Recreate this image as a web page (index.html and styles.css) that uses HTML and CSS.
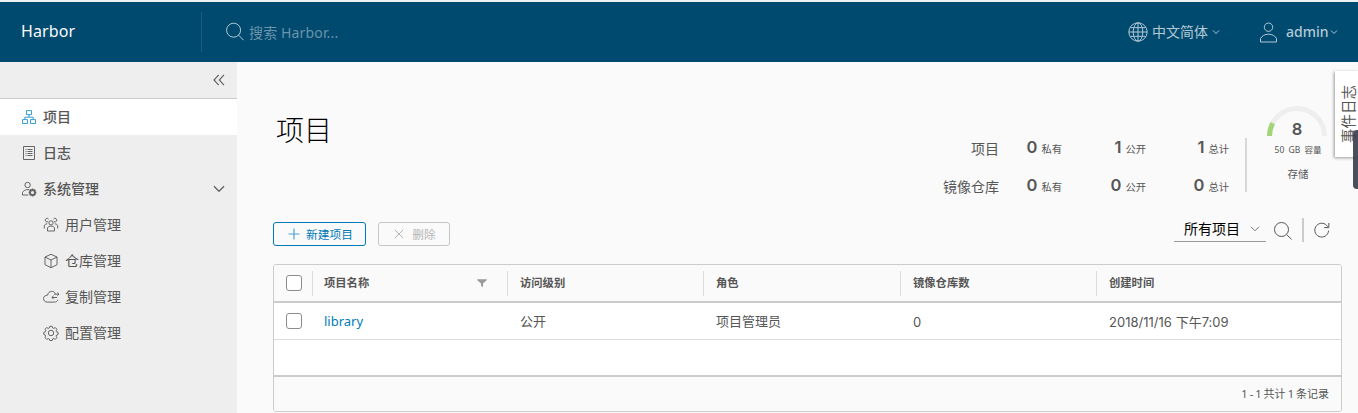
FILE: index.html
```html
<!DOCTYPE html>
<html lang="zh-CN">
<head>
<meta charset="utf-8">
<title>Harbor</title>
<link rel="stylesheet" href="styles.css">
</head>
<body>
<header class="header">
  <div class="brand">Harbor</div>
  <div class="search">
    <svg class="ic" width="20" height="20" viewBox="0 0 20 20"><circle cx="8.6" cy="8.2" r="7"/><path d="M13.6 13.2l5 5"/></svg>
    <span>搜索 Harbor...</span>
  </div>
  <div class="lang">
    <svg class="ic" width="20" height="20" viewBox="0 0 20 20"><circle cx="10" cy="10" r="9.2"/><ellipse cx="10" cy="10" rx="4.8" ry="9.2"/><path d="M10 1v18M1 10h18M2.3 5.7h15.4M2.3 14.3h15.4"/></svg>
    <span>中文简体</span>
    <svg class="ic caret" width="8" height="8" viewBox="0 0 8 8"><path d="M1 2.5l3 3 3-3"/></svg>
  </div>
  <div class="user">
    <svg class="ic" width="20" height="22" viewBox="0 0 20 22"><circle cx="9.500" cy="6.200" r="4.200"/><path d="M1.500 21v-3.400c1.300-2.800 4.300-4.400 8-4.400s6.700 1.600 8 4.400V21z"/></svg>
    <span>admin</span>
    <svg class="ic caret" width="8" height="8" viewBox="0 0 8 8"><path d="M1 2.500l3 3 3-3"/></svg>
  </div>
</header>
<div class="main">
  <nav class="sidebar">
    <div class="collapse"><svg class="ic" width="12" height="12" viewBox="0 0 12 12"><path d="M5.700 .8L1 6l4.700 5.200M11 .8L6.300 6 11 11.200"/></svg></div>
    <a class="item active"><svg class="ic" width="16" height="16" viewBox="0 0 16 16"><path d="M5.500 1.600h5v4h-5zM1.500 10.600h5v3.900h-5zM9.500 10.600h5v3.900h-5zM8 5.600v2.500M3.800 10.500V8.200h8.400v2.300"/></svg><span>项目</span></a>
    <a class="item"><svg class="ic" width="16" height="16" viewBox="0 0 16 16"><path d="M2.500 1.500h11v13h-11z"/><path d="M4.500 4.500h1M6.500 4.500h5M4.500 6.500h1M6.500 6.500h5M4.500 8.500h1M6.500 8.500h5M4.500 10.500h1M6.500 10.500h5"/></svg><span>日志</span></a>
    <a class="item"><svg class="ic" width="16" height="16" viewBox="0 0 16 16"><circle cx="6.600" cy="4" r="2.700"/><path d="M7.300 14H1.500v-2.500C2.500 9.700 4.300 8.600 6.800 8.600l1.400.1"/><circle cx="11.500" cy="11.500" r="2.500" stroke-width="1.800"/><path d="M11.500 7.600v1M11.500 14.400v1M7.600 11.500h1M14.400 11.500h1M8.700 8.700l.8.800M13.500 13.500l.8.800M14.300 8.700l-.8.800M9.500 13.500l-.8.800" stroke-width="1.500"/></svg><span>系统管理</span><svg class="ic fold" width="12" height="8" viewBox="0 0 12 8"><path d="M1 1.200l5 5 5-5"/></svg></a>
    <a class="item sub"><svg class="ic" width="16" height="16" viewBox="0 0 16 16"><circle cx="8" cy="5.900" r="2.100"/><path d="M4.500 14v-3c.4-1.200 1.600-1.900 3.500-1.900s3.100.7 3.500 1.900v3zM5.200 4.500A1.800 1.800 0 1 1 5.600 2.200M10.800 4.500a1.800 1.800 0 1 0-.4-2.300M4.200 6.800C2.600 7 1.300 7.700 1.300 8.800v2.700M11.800 6.800c1.600.2 2.900.9 2.900 2v2.700"/></svg><span>用户管理</span></a>
    <a class="item sub"><svg class="ic" width="16" height="16" viewBox="0 0 16 16"><path d="M8 1.300l6 2.700v7.700l-6 3-6-3V4zM2 4l6 3 6-3M8 7v7.500"/></svg><span>仓库管理</span></a>
    <a class="item sub"><svg class="ic wide" width="18" height="16" viewBox="0 0 18 16"><path d="M12.400 4.700C11.500 2.900 10 2.200 8.400 2.400 6.300 2.600 4.900 4 4.700 6.100c-2.500.2-4.200 1.400-4.200 3.400 0 2.200 1.700 3.600 3.700 3.600h7.300c1.700 0 2.900-.8 3.300-2.300M11 5.200h4.800M14.300 3.600l1.700 1.600-1.700 1.600M9 8.500h5M10.600 6.900L8.800 8.500l1.800 1.600"/></svg><span>复制管理</span></a>
    <a class="item sub"><svg class="ic" width="16" height="16" viewBox="0 0 16 16"><circle cx="8" cy="8" r="2.700"/><path d="M6.800 1.300h2.400l.5 1.700 1 .4 1.600-.8 1.600 1.600-.8 1.600.4 1 1.600.5v2.200l-1.600.6-.4 1 .8 1.600-1.600 1.600-1.600-.8-1 .4-.5 1.600H6.800L6.300 14l-1-.4-1.600.8L2 12.700l.8-1.600-.4-1L.8 9.500V7.300l1.600-.5.4-1L2 4.200l1.700-1.600 1.600.8 1-.4z"/></svg><span>配置管理</span></a>
  </nav>
  <main class="content">
    <section class="top">
      <h1>项目</h1>
      <div class="stats">
        <span class="label">项目</span><span class="stat"><b>0</b>私有</span><span class="stat"><b>1</b>公开</span><span class="stat"><b>1</b>总计</span>
        <span class="label">镜像仓库</span><span class="stat"><b>0</b>私有</span><span class="stat"><b>0</b>公开</span><span class="stat"><b>0</b>总计</span>
      </div>
      <div class="rule"></div>
      <div class="gauge">
        <svg width="60" height="30" viewBox="0 0 60 30"><path d="M2.500 30a27.500 27.500 0 0 1 55 0" fill="none" stroke="#eee" stroke-width="5"/><path d="M2.500 30A27.500 27.500 0 0 1 5.700 17.100" fill="none" stroke="#a3d47a" stroke-width="5"/></svg>
        <b>8</b>
        <span class="capacity">50 GB 容量</span>
        <span class="storage">存储</span>
      </div>
    </section>
    <section class="toolbar">
      <button class="btn primary"><svg class="ic" width="12" height="12" viewBox="0 0 12 12"><path d="M6 .5v11M.5 6h11"/></svg>新建项目</button>
      <button class="btn disabled"><svg class="ic" width="10" height="10" viewBox="0 0 10 10"><path d="M.8.800l8.400 8.400M9.200.8L.8 9.200"/></svg>删除</button>
      <div class="select"><span>所有项目</span><svg class="ic" width="10" height="8" viewBox="0 0 10 8"><path d="M1 1.800l4 4 4-4"/></svg></div>
      <svg class="ic find" width="20" height="20" viewBox="0 0 20 20"><circle cx="8.500" cy="8.500" r="7"/><path d="M13.600 13.600l5 4.800"/></svg>
      <div class="split"></div>
      <svg class="ic refresh" width="16" height="16" viewBox="0 0 16 16"><path d="M14.600 8.700A6.900 6.900 0 1 1 13.700 4.700M14.800 1v4.600h-4.600"/></svg>
    </section>
    <section class="grid">
      <div class="row head">
        <div class="check"><i></i></div>
        <div class="cell">项目名称<svg width="10" height="8" viewBox="0 0 10 8"><path d="M.3.300h9.400v1L6 4.500V8L4 7V4.500L.3 1.300z" fill="#9a9a9a"/></svg></div>
        <div class="cell">访问级别</div><div class="cell">角色</div><div class="cell">镜像仓库数</div><div class="cell">创建时间</div>
      </div>
      <div class="row">
        <div class="check"><i></i></div>
        <div class="cell name"><a class="link">library</a></div><div class="cell">公开</div><div class="cell">项目管理员</div><div class="cell num">0</div><div class="cell date">2018/11/16 下午7:09</div>
      </div>
      <div class="blank"></div>
      <div class="foot">1 - 1 共计 1 条记录</div>
    </section>
  </main>
</div>
<aside class="events"><span>事件日志</span></aside>
<div class="handle"></div>
</body>
</html>
```
FILE: styles.css
```css
* { box-sizing: border-box; }
body { margin: 0; width: 1358px; height: 413px; overflow: hidden; border-top: 2px solid #eef1f2; background: #fafafa; color: #565656; font: 14px/20px "Noto Sans", "Noto Sans CJK SC", sans-serif; white-space: nowrap; }
svg { display: block; flex: none; }
.ic { fill: none; stroke: currentColor; stroke-width: 1; }
.header { height: 60px; background: #004a70; color: #fafafa; display: flex; align-items: center; }
.brand { width: 202px; height: 40px; padding-left: 21px; border-right: 1px solid #1d5d7e; font-size: 16px; line-height: 38px; letter-spacing: .1px; }
.search { display: flex; align-items: center; gap: 4px; margin-left: 23px; color: #b3c9d4; }
.search span { color: #6b93aa; line-height: 22px; padding-top: 2px; letter-spacing: .15px; }
.lang, .user { display: flex; align-items: center; color: #b3c9d4; }
.lang { margin-left: auto; width: 131px; gap: 4px; }
.lang .caret { margin-left: 0; }
.user { width: 99px; gap: 6px; font-weight: 500; }
.user svg:first-child { margin-right: 1px; }
.user .caret { margin-left: -5px; }
.main { display: flex; height: 351px; }
.sidebar { width: 237px; background: #eee; }
.sidebar .ic { stroke-opacity: .9; }
.collapse { height: 37px; border-bottom: 1px solid #ccc; display: flex; align-items: center; justify-content: flex-end; padding-right: 12px; }
.collapse .ic { stroke-width: 1.2; }
.item { height: 36px; display: flex; align-items: center; gap: 6px; padding: 0 12px 0 21px; font-weight: 500; line-height: 18px; }
.item.active { background: #fff; }
.item.active .ic { color: #2496ce; }
.item .fold { margin-left: auto; stroke-width: 1.4; }
.item.sub { padding-left: 43px; font-weight: 400; }
.item.sub .wide { margin-right: -2px; }
.content { width: 1121px; padding: 0 16px 0 36px; }
.top { height: 160px; display: flex; }
h1 { margin: 50px 0 0 3px; font-size: 28px; line-height: 36px; font-weight: 300; color: #000; }
.stats { display: grid; grid-template-columns: 76px 63px 84px 83px; grid-template-rows: 38px 38px; margin: 67px 0 0 auto; align-items: center; justify-items: end; }
.stats .label { font-size: 14px; padding-top: 2px; }
.stat { font-size: 10.3px; display: flex; align-items: baseline; gap: 4px; }
.stat b { font: 600 16.5px/20px Inter, sans-serif; }
.rule { width: 2px; height: 54px; margin: 76px 0 0 16px; background: #d7d7d7; }
.gauge { width: 62px; margin: 44px 14px 0 19px; display: flex; flex-direction: column; align-items: center; }
.gauge b { font: 600 16.5px/20px Inter, sans-serif; margin-top: -17px; }
.capacity { font-size: 8.5px; line-height: 12px; margin: 5px 0 0 2px; word-spacing: 2px; }
.storage { font-size: 10.5px; line-height: 16px; margin: 10px 0 0 2px; }
.toolbar { height: 24px; display: flex; align-items: center; }
.btn { height: 24px; padding: 0; border: 1px solid #0079b8; border-radius: 3px; background: none; font: 11.7px/22px "Noto Sans CJK SC", sans-serif; color: #0079b8; display: flex; align-items: center; justify-content: center; gap: 6px; }
.primary { width: 93px; padding-left: 2px; }
.primary .ic { color: #4ba3d0; stroke-width: 1.2; }
.disabled { width: 72px; margin-left: 12px; padding-left: 2px; color: #b5b5b5; border-color: #c5c5c5; gap: 8px; }
.select { width: 92px; height: 24px; margin: -9px 7px 0 auto; padding: 0 6px 0 10px; border-bottom: 1px solid #9a9a9a; color: #000; display: flex; align-items: center; justify-content: space-between; }
.select .ic { color: #777; }
.find { margin-top: -6px; }
.split { width: 2px; height: 24px; margin: -8px 10px 0 9px; background: #ccc; }
.refresh { margin: -8px 12px 0 0; }
.grid { width: 1069px; height: 148px; margin-top: 18px; border: 1px solid #ccc; border-radius: 3px; background: #fff; overflow: hidden; }
.row { display: grid; grid-template-columns: 38px 195px 196px 197px 196px 1fr; height: 37px; border-bottom: 1px solid #ddd; align-items: center; font-size: 13px; }
.head { height: 38px; border-bottom: 2px solid #ccc; background: #fafafa; font-size: 11.3px; font-weight: 700; }
.check i { display: block; width: 16px; height: 16px; margin-left: 12px; border: 1px solid #8c8c8c; border-radius: 3px; background: #fff; }
.cell { padding-left: 13px; }
.cell.name { padding-left: 12px; }
.cell.num, .cell.date { font-family: Inter, "Noto Sans CJK SC", sans-serif; padding-top: 1px; }
.cell.date { letter-spacing: .02px; }
.head .cell { height: 25px; border-left: 1px solid #ddd; display: flex; align-items: center; justify-content: space-between; padding: 0 20px 0 12px; }
.head .cell:nth-child(2) { padding-left: 11px; }
.link { color: #007cbb; }
.blank { height: 37px; border-bottom: 2px solid #ccc; }
.foot { height: 34px; background: #fafafa; padding-right: 12px; text-align: right; font-size: 11px; line-height: 34px; word-spacing: -.8px; }
.events { position: absolute; left: 1335px; top: 71px; width: 23px; height: 86px; background: #fff; box-shadow: -1px 1px 3px #999; display: flex; align-items: center; justify-content: center; }
.events span { writing-mode: vertical-rl; transform: rotate(180deg); text-orientation: sideways; font-size: 14.5px; line-height: 20px; margin-left: 2px; }
.handle { position: absolute; left: 1353px; top: 130px; width: 5px; height: 59px; background: rgba(50, 55, 71, .88); border-radius: 4px 0 0 4px; }
```
